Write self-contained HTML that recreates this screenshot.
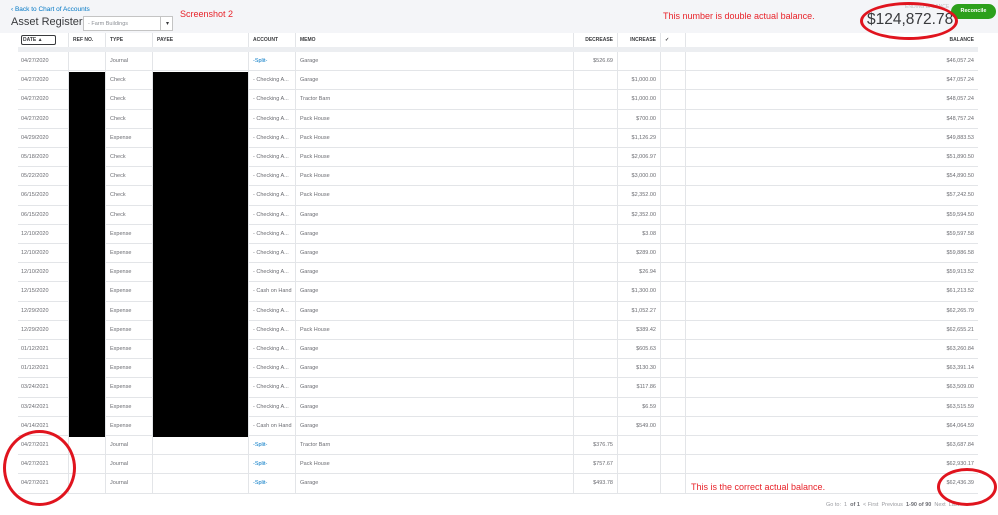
<!DOCTYPE html><html><head><meta charset="utf-8"><style>
*{margin:0;padding:0;box-sizing:border-box}
body{width:998px;height:515px;background:#fff;font-family:"Liberation Sans",sans-serif;position:relative;overflow:hidden;color:#6b6c72}
.hdr{position:absolute;left:0;top:0;width:998px;height:33px;background:#f4f5f8}
.back{position:absolute;left:11px;top:6px;font-size:6.5px;color:#0077c5}
.title{position:absolute;left:11px;top:16px;font-size:11px;color:#393a3d}
.sel{position:absolute;left:83px;top:16px;width:90px;height:15px;border:1px solid #c4c4c4;background:#fff;font-size:5.5px;padding:4px 4px;color:#8d9096}
.sel:after{content:"▾";position:absolute;right:3px;top:3px;font-size:6px;color:#393a3d}
.sel i{position:absolute;right:11px;top:0;height:13px;border-left:1px solid #c4c4c4}
.red{position:absolute;color:#e8232a;font-size:9px}
.amt{position:absolute;left:867px;top:11px;font-size:15.5px;color:#393a3d}
.btn{position:absolute;left:951px;top:4px;width:45px;height:15px;border-radius:8px;background:#2ca01c;color:#fff;font-size:5.5px;font-weight:bold;text-align:center;line-height:15px}
.ell{position:absolute;border:3.5px solid #e0141e;border-radius:50%}
.row{position:absolute;left:18px;width:960px;height:19.2px;border-bottom:1px solid #e3e5e8;font-size:5.5px}
.c{position:absolute;top:0;height:100%;line-height:19px;border-left:1px solid #e3e5e8;padding:0 4px;white-space:nowrap;overflow:hidden}
.h .c{font-weight:bold;color:#393a3d;font-size:5px;line-height:14px;overflow:visible}
.r{text-align:right}
.blk{position:absolute;background:#000}
.ft{position:absolute;top:502px;font-size:5.5px;color:#9a9ba0}
</style></head><body>
<div class="hdr"></div>
<div class="back">‹ Back to Chart of Accounts</div>
<div class="title">Asset Register</div>
<div class="sel">- Farm Buildings<i></i></div>
<div class="red" style="left:180px;top:9px">Screenshot 2</div>
<div class="red" style="left:663px;top:11px">This number is double actual balance.</div>
<div style="position:absolute;left:905px;top:4px;font-size:5px;color:#c0c0c0">ENDING BALANCE</div>
<div class="amt">$124,872.78</div>
<div class="btn">Reconcile</div>
<div id="t"></div>
<div class="blk" style="left:69px;top:72px;width:36px;height:365px"></div>
<div class="blk" style="left:153px;top:72px;width:95px;height:365px"></div>
<div style="position:absolute;left:18px;top:47px;width:960px;height:5px;background:#eceef1"></div>
<div class="red" style="left:691px;top:482px">This is the correct actual balance.</div>
<div class="ft" style="left:826px">Go to: &nbsp;1 &nbsp;<b style="color:#6b6c72">of 1</b> &nbsp;&lt; First &nbsp;Previous &nbsp;<b style="color:#6b6c72">1-90 of 90</b> &nbsp;Next &nbsp;Last &gt;</div>
<div class="ell" style="left:860px;top:2px;width:98px;height:38px"></div>
<div class="ell" style="left:3px;top:430px;width:73px;height:76px"></div>
<div class="ell" style="left:937px;top:468px;width:60px;height:38px"></div>
<script>
var cols=[[0,50],[50,37],[87,47],[134,96],[230,47],[277,278],[555,44],[599,43],[642,25],[667,293]];
var rows=[
["04/27/2020","","Journal","","-Split-","Garage","$526.69","","","$46,057.24"],
["04/27/2020","","Check","","- Checking A...","Garage","","$1,000.00","","$47,057.24"],
["04/27/2020","","Check","","- Checking A...","Tractor Barn","","$1,000.00","","$48,057.24"],
["04/27/2020","","Check","","- Checking A...","Pack House","","$700.00","","$48,757.24"],
["04/29/2020","","Expense","","- Checking A...","Pack House","","$1,126.29","","$49,883.53"],
["05/18/2020","","Check","","- Checking A...","Pack House","","$2,006.97","","$51,890.50"],
["05/22/2020","","Check","","- Checking A...","Pack House","","$3,000.00","","$54,890.50"],
["06/15/2020","","Check","","- Checking A...","Pack House","","$2,352.00","","$57,242.50"],
["06/15/2020","","Check","","- Checking A...","Garage","","$2,352.00","","$59,594.50"],
["12/10/2020","","Expense","","- Checking A...","Garage","","$3.08","","$59,597.58"],
["12/10/2020","","Expense","","- Checking A...","Garage","","$289.00","","$59,886.58"],
["12/10/2020","","Expense","","- Checking A...","Garage","","$26.94","","$59,913.52"],
["12/15/2020","","Expense","","- Cash on Hand","Garage","","$1,300.00","","$61,213.52"],
["12/29/2020","","Expense","","- Checking A...","Garage","","$1,052.27","","$62,265.79"],
["12/29/2020","","Expense","","- Checking A...","Pack House","","$389.42","","$62,655.21"],
["01/12/2021","","Expense","","- Checking A...","Garage","","$605.63","","$63,260.84"],
["01/12/2021","","Expense","","- Checking A...","Garage","","$130.30","","$63,391.14"],
["03/24/2021","","Expense","","- Checking A...","Garage","","$117.86","","$63,509.00"],
["03/24/2021","","Expense","","- Checking A...","Garage","","$6.59","","$63,515.59"],
["04/14/2021","","Expense","","- Cash on Hand","Garage","","$549.00","","$64,064.59"],
["04/27/2021","","Journal","","-Split-","Tractor Barn","$376.75","","","$63,687.84"],
["04/27/2021","","Journal","","-Split-","Pack House","$757.67","","","$62,930.17"],
["04/27/2021","","Journal","","-Split-","Garage","$493.78","","","$62,436.39"]];
var h='<div class="row h" style="top:33px;height:14px;border-bottom:none">';
var hd=["DATE ▲","REF NO.","TYPE","PAYEE","ACCOUNT","MEMO","DECREASE","INCREASE","✓","BALANCE"];
cols.forEach(function(c,i){h+='<div class="c'+(i==6||i==7||i==9?' r':'')+'" style="left:'+c[0]+'px;width:'+c[1]+'px;'+(i==0?'border-left:none':'')+'">'+(i==0?'<span style="border:1.2px solid #393a3d;border-radius:2px;padding:1px 12px 1px 1px;margin-left:-1px">DATE ▲</span>':hd[i])+'</div>'});
h+='</div>';
rows.forEach(function(r,k){h+='<div class="row" style="top:'+(52+k*19.2)+'px">';
cols.forEach(function(c,i){h+='<div class="c'+(i>=6?' r':'')+'" style="left:'+c[0]+'px;width:'+c[1]+'px;'+(i==0?'border-left:none;padding-left:3px;':'')+(r[i]=="-Split-"?'color:#0077c5;':'')+'">'+r[i]+'</div>'});
h+='</div>'});
document.getElementById('t').innerHTML=h;
</script>
</body></html>
